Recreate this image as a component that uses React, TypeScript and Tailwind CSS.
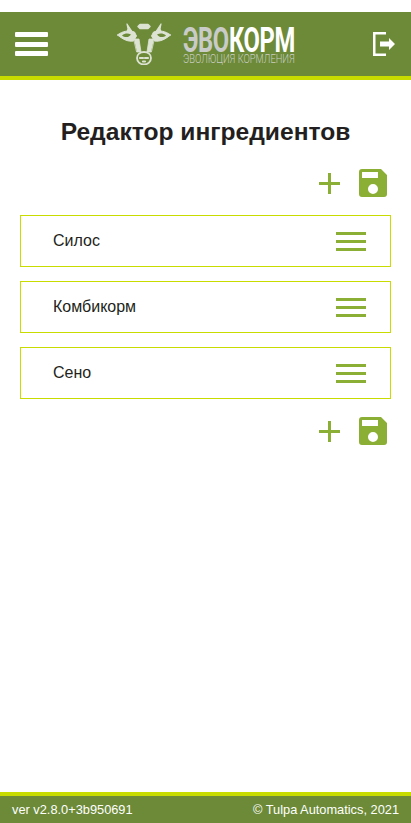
import React from "react";

const ingredients = ["Силос", "Комбикорм", "Сено"];

const CowLogo = () => (
  <svg width="54" height="42" viewBox="0 0 54 42" fill="none" stroke="#dde3d3" strokeWidth="1.500" strokeLinejoin="round" strokeLinecap="round">
    <path d="M16 10 10 1l1 5-1 3 3 2M38 10l6-9-1 5 1 3-3 2" fill="#dde3d3" strokeWidth="1.200" />
    <path d="M23 1.500h8l2 2-2 2h-8l-2-2z" fill="#dde3d3" />
    <path d="M0.500 12c5-4 11-5 17-3l2 4-3 5c-6 1-11-2-16-6Z" fill="#dde3d3" strokeWidth="1" />
    <path d="M53.500 12c-5-4-11-5-17-3l-2 4 3 5c6 1 11-2 16-6Z" fill="#dde3d3" strokeWidth="1" />
    <path d="M5 12.500c3-2.500 6-2.500 9-1-2 3-6 3.500-9 1ZM49 12.500c-3-2.500-6-2.500-9-1 2 3 6 3.500 9 1Z" fill="#6c8a37" stroke="none" />
    <path d="M17 16h5l2 13h-4zM37 16h-5l-2 13h4z" fill="#dde3d3" strokeWidth="0.800" />
    <path d="M20 35c0-3.500 3-6 7-6s7 2.500 7 6-3 6.500-7 6.500-7-3-7-6.500Z" strokeWidth="1.800" />
    <path d="M23 35h3M28 35h3M26 38.500h2" strokeWidth="2.200" />
  </svg>
);

const SaveIcon = () => (
  <svg width="28" height="28" viewBox="0 0 28 28">
    <path
      fillRule="evenodd"
      d="M3 0h19l6 6v19a3 3 0 0 1-3 3H3a3 3 0 0 1-3-3V3a3 3 0 0 1 3-3Zm0 3v6h16V3H3Zm11 12a5 5 0 1 0 0 10 5 5 0 0 0 0-10Z"
      fill="#8bae35"
    />
  </svg>
);

const PlusIcon = () => (
  <svg width="21" height="21" viewBox="0 0 21 21" fill="#8bae35">
    <rect x="9" y="0" width="3" height="21" />
    <rect x="0" y="9" width="21" height="3" />
  </svg>
);

const Toolbar = () => (
  <div className="flex h-9 items-center justify-end gap-[19px] pr-[24px]">
    <PlusIcon />
    <SaveIcon />
  </div>
);

const ExitIcon = () => (
  <svg width="22" height="24" viewBox="0 0 22 24" fill="#fff">
    <path d="M0 0h13v2.500H2.500v19H13V24H0z" />
    <path d="M7 9.500h9V6l6 6-6 6v-3.500H7z" />
  </svg>
);

export default function App() {
  return (
    <div className="flex min-h-[823px] flex-col bg-white pt-3 font-['Liberation_Sans',Arial,sans-serif] text-[#231f20]">
      <header className="flex h-[68px] items-center justify-between border-b-4 border-[#c8dc00] bg-[#6c8a37] pl-[15px] pr-[16px]">
        <div className="flex w-[33px] flex-col gap-[4.5px]">
          <span className="h-[5px] rounded-[1px] bg-white" />
          <span className="h-[5px] rounded-[1px] bg-white" />
          <span className="h-[5px] rounded-[1px] bg-white" />
        </div>
        <div className="-ml-[9px] flex items-center gap-[12px]">
          <CowLogo />
          <div className="relative h-[44px] w-[112px]">
            <div className="mt-[4px] origin-top-left scale-x-[0.688] whitespace-nowrap font-['Roboto',sans-serif] text-[34.5px] font-bold leading-[28px] tracking-[-0.5px]">
              <span className="text-[#c9cbc9]">ЭВО</span>
              <span className="text-white">КОРМ</span>
            </div>
            <div className="absolute left-0 top-[32px] origin-top-left scale-x-[0.75] whitespace-nowrap font-['Roboto',sans-serif] text-[12.5px] font-light leading-[9px] text-[#c9cdc1]">
              ЭВОЛЮЦИЯ КОРМЛЕНИЯ
            </div>
          </div>
        </div>
        <ExitIcon />
      </header>

      <main className="flex-1 px-5">
        <h1 className="mt-[38px] text-center text-[24.6px] font-bold leading-7">Редактор ингредиентов</h1>
        <div className="mt-[19px] -mr-5">
          <Toolbar />
        </div>
        <div className="mt-[14px] flex flex-col gap-[14px]">
          {ingredients.map((name) => (
            <div key={name} className="flex h-[52px] items-center justify-between border border-[#c8dc00] pl-[32px] pr-[24px]">
              <span className="text-base">{name}</span>
              <div className="flex w-[30px] flex-col gap-[5px]">
                <span className="h-[3px] bg-[#8bae35]" />
                <span className="h-[3px] bg-[#8bae35]" />
                <span className="h-[3px] bg-[#8bae35]" />
              </div>
            </div>
          ))}
        </div>
        <div className="mt-[14px] -mr-5">
          <Toolbar />
        </div>
      </main>

      <footer className="flex h-[31px] items-center justify-between border-t-4 border-[#c8dc00] bg-[#6c8a37] px-3 text-[12.8px] text-white">
        <span>ver v2.8.0+3b950691</span>
        <span>© Tulpa Automatics, 2021</span>
      </footer>
    </div>
  );
}
